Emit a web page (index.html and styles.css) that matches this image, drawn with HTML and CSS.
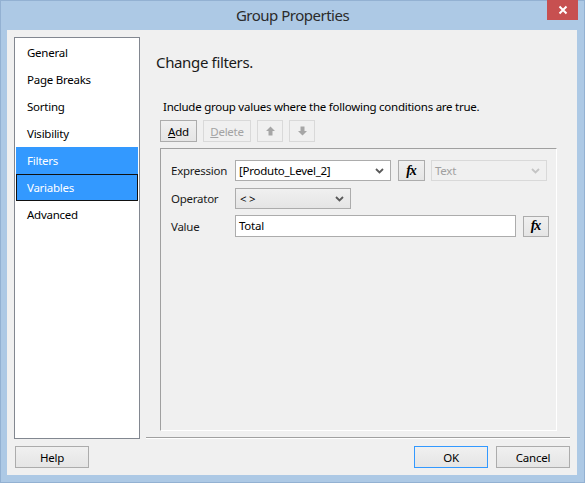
FILE: index.html
```html
<!DOCTYPE html>
<html>
<head>
<meta charset="utf-8">
<link rel="stylesheet" href="styles.css">
</head>
<body>
<div class="window">
  <div class="titlebar">
    <div></div>
    <div class="title">Group Properties</div>
    <div class="tb-right">
      <div class="close">
        <svg width="10" height="10" viewBox="0 0 10 10"><path d="M1.5 1.5 L8.5 8.5 M8.5 1.5 L1.5 8.5" stroke="#fff" stroke-width="2" fill="none"/></svg>
      </div>
    </div>
  </div>
  <div class="client">
    <div class="main">
      <div class="nav">
        <div class="nav-item">General</div>
        <div class="nav-item">Page Breaks</div>
        <div class="nav-item">Sorting</div>
        <div class="nav-item">Visibility</div>
        <div class="nav-item selected">Filters</div>
        <div class="nav-item selected focus">Variables</div>
        <div class="nav-item">Advanced</div>
      </div>
      <div class="content">
        <div class="heading">Change filters.</div>
        <div class="intro">Include group values where the following conditions are true.</div>
        <div class="toolbar">
          <div class="btn btn-add"><u>A</u>dd</div>
          <div class="btn btn-delete disabled"><u>D</u>elete</div>
          <div class="btn btn-arrow disabled">
            <svg width="9" height="10" viewBox="0 0 9 10"><path d="M4.5 0.5 L9 5 L6.5 5 L6.5 9.5 L2.5 9.5 L2.5 5 L0 5 Z" fill="#a6a6a6"/></svg>
          </div>
          <div class="btn btn-arrow disabled">
            <svg width="9" height="10" viewBox="0 0 9 10"><path d="M4.5 9.5 L9 5 L6.5 5 L6.5 0.5 L2.5 0.5 L2.5 5 L0 5 Z" fill="#a6a6a6"/></svg>
          </div>
        </div>
        <div class="panel">
          <div class="row row-expr">
            <div class="label">Expression</div>
            <div class="combo combo-expr">
              <span class="combo-text">[Produto_Level_2]</span>
              <svg class="chev" width="9" height="6" viewBox="0 0 9 6"><path d="M1 1 L4.5 4.5 L8 1" stroke="#5a5a5a" stroke-width="1.8" fill="none"/></svg>
            </div>
            <div class="fx">fx</div>
            <div class="combo combo-type disabled">
              <span class="combo-text">Text</span>
              <svg class="chev" width="9" height="6" viewBox="0 0 9 6"><path d="M1 1 L4.5 4.5 L8 1" stroke="#c4c4c4" stroke-width="1.8" fill="none"/></svg>
            </div>
          </div>
          <div class="row row-op">
            <div class="label">Operator</div>
            <div class="combo combo-op">
              <span class="combo-text">&lt; &gt;</span>
              <svg class="chev" width="9" height="6" viewBox="0 0 9 6"><path d="M1 1 L4.5 4.5 L8 1" stroke="#5a5a5a" stroke-width="1.8" fill="none"/></svg>
            </div>
          </div>
          <div class="row row-val">
            <div class="label">Value</div>
            <div class="textbox">Total</div>
            <div class="fx fx-val">fx</div>
          </div>
        </div>
      </div>
    </div>
    <div class="footer">
      <div class="btn btn-foot">Help</div>
      <div class="spacer"></div>
      <div class="btn btn-foot default">OK</div>
      <div class="btn btn-foot">Cancel</div>
    </div>
  </div>
</div>
</body>
</html>
```

FILE: styles.css
```css
* { box-sizing: border-box; }
html, body { margin: 0; padding: 0; }
body {
  font-family: "Segoe UI", "Noto Sans", "Open Sans", sans-serif;
  font-size: 11.5px;
  letter-spacing: -0.25px;
  color: #000;
  background: #adc9e5;
}
.window {
  width: 585px;
  height: 483px;
  background: #adc9e5;
  border: 1px solid #93b1d2;
  display: flex;
  flex-direction: column;
}
.titlebar {
  height: 29px;
  display: grid;
  grid-template-columns: 1fr auto 1fr;
  align-items: start;
}
.title {
  font-size: 15px;
  letter-spacing: -0.5px;
  color: #2b2b2b;
  line-height: 30px;
  margin-top: -1px;
}
.tb-right {
  display: flex;
  justify-content: flex-end;
  padding-right: 6px;
}
.close {
  width: 31px;
  height: 20px;
  background: #c75050;
  display: flex;
  align-items: center;
  justify-content: center;
  margin-top: -1px;
}
.client {
  margin: 0 7px 7px 6px;
  height: 445px;
  background: #f0f0f0;
  display: flex;
  flex-direction: column;
}
.main {
  display: flex;
  padding: 7px 7px 0 7px;
}
.nav {
  width: 126px;
  height: 402px;
  background: #fff;
  border: 1px solid #828790;
  padding: 1px 1px 0 1px;
}
.nav-item {
  height: 27px;
  line-height: 25px;
  padding-left: 10px;
  border: 1px solid transparent;
  color: #000;
}
.nav-item.selected {
  background: #3399ff;
  color: #fff;
}
.nav-item.focus {
  border-color: #111;
}
.content {
  flex: 1;
  margin-left: 6px;
  height: 401px;
  border-bottom: 1px solid #a0a0a0;
  box-shadow: 0 1px 0 #fff;
  display: flex;
  flex-direction: column;
  padding: 15px 13px 0 14px;
}
.heading {
  font-size: 15px;
  letter-spacing: -0.35px;
  line-height: 20px;
  margin-left: -4px;
  color: #1a1a1a;
}
.intro {
  margin-top: 27px;
  line-height: 16px;
  margin-left: 3px;
}
.toolbar {
  display: flex;
  gap: 6px;
  margin-top: 5px;
}
.btn {
  height: 22px;
  border: 1px solid #acacac;
  background: linear-gradient(#f0f0f0, #e5e5e5);
  display: flex;
  align-items: center;
  justify-content: center;
}
.btn.disabled {
  border-color: #d9d9d9;
  background: #f0f0f0;
  color: #a3a3a3;
}
.btn-add { width: 37px; }
.btn-delete { width: 48px; }
.btn-arrow { width: 26px; }
.panel {
  flex: 1;
  margin-top: 6px;
  margin-bottom: 6px;
  border-top: 1px solid #a0a0a0;
  border-left: 1px solid #a0a0a0;
  border-right: 1px solid #fff;
  border-bottom: 1px solid #fff;
  padding: 11px 0 0 10px;
}
.row {
  display: flex;
  align-items: center;
}
.label {
  width: 64px;
  color: #1a1a1a;
}
.row-expr { height: 21px; }
.row-op { height: 21px; margin-top: 7px; }
.row-val { height: 22px; margin-top: 6px; }
.combo {
  height: 21px;
  border: 1px solid #acacac;
  background: #fff;
  display: flex;
  align-items: center;
  justify-content: space-between;
  padding: 0 6px 0 3px;
}
.combo-expr { width: 156px; }
.combo-op {
  width: 116px;
  background: linear-gradient(#f0f0f0, #e5e5e5);
  padding-left: 4px;
}
.combo-type {
  width: 116px;
  margin-left: 6px;
  border-color: #d9d9d9;
  background: #f0f0f0;
  color: #a0a0a0;
}
.fx {
  width: 27px;
  height: 21px;
  margin-left: 7px;
  border: 1px solid #acacac;
  background: linear-gradient(#f0f0f0, #e5e5e5);
  font-family: "Liberation Serif", "DejaVu Serif", serif;
  font-style: italic;
  font-weight: bold;
  font-size: 14px;
  letter-spacing: -1px;
  display: flex;
  align-items: center;
  justify-content: center;
  padding-right: 1px;
}
.fx-val { width: 26px; height: 21px; }
.textbox {
  width: 281px;
  height: 22px;
  border: 1px solid #acacac;
  background: #fff;
  line-height: 20px;
  padding-left: 3px;
}
.footer {
  display: flex;
  gap: 8px;
  margin-top: 7px;
  padding: 0 7px 0 8px;
}
.spacer { flex: 1; }
.btn-foot { width: 74px; }
.btn-foot.default { border-color: #3399ff; }
```
